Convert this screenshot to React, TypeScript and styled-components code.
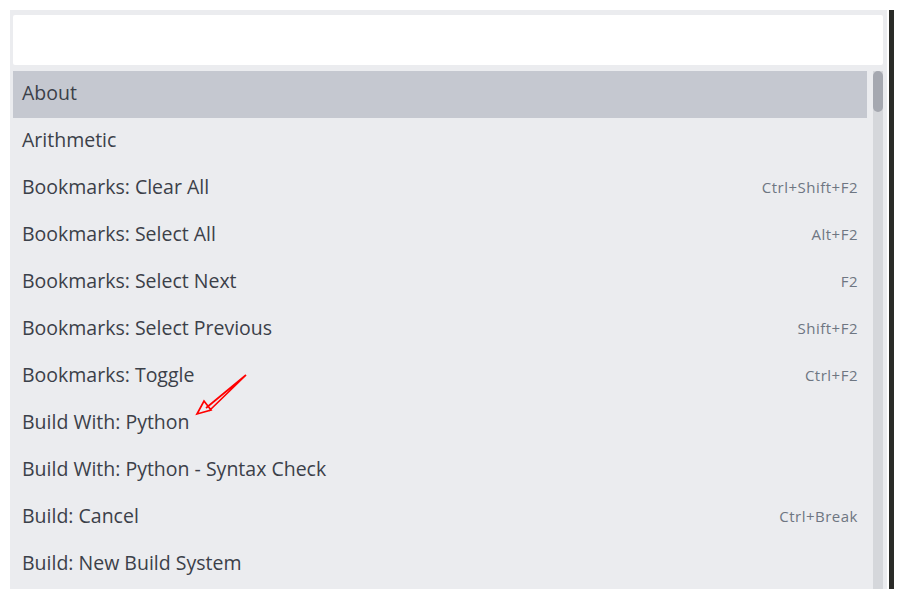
import React from "react";
import styled, { createGlobalStyle } from "styled-components";

const Global = createGlobalStyle`
  html, body { margin: 0; padding: 0; background: #ffffff; overflow: hidden; }
  body { font-family: "Open Sans", "Noto Sans", sans-serif; }
`;

const Page = styled.div`
  display: flex;
  align-items: stretch;
  gap: 2px;
  padding: 10px 0 0 10px;
  height: 589px;
  box-sizing: border-box;
  position: relative;
`;

const Panel = styled.div`
  width: 877px;
  background: #ebecef;
  padding: 5px 4px 0 3px;
  box-sizing: border-box;
  display: flex;
  flex-direction: column;
  gap: 6px;
  overflow: hidden;
`;

const Edge = styled.div`
  width: 5px;
  background: #2a2b27;
`;

const Input = styled.div`
  height: 50px;
  background: #ffffff;
  border-radius: 2px;
  flex-shrink: 0;
`;

const Body = styled.div`
  display: flex;
  gap: 6px;
  flex: 1;
  min-height: 0;
`;

const List = styled.div`
  flex: 1;
  display: flex;
  flex-direction: column;
`;

const Row = styled.div<{ $selected?: boolean }>`
  height: 47px;
  flex-shrink: 0;
  display: flex;
  align-items: center;
  justify-content: space-between;
  padding: 0 9px 4px 9px;
  box-sizing: border-box;
  background: ${(p) => (p.$selected ? "#c5c8d0" : "transparent")};
`;

const Label = styled.span`
  font-size: 19.5px;
  color: #3b4049;
`;

const Key = styled.span`
  font-size: 15px;
  letter-spacing: 0.5px;
  color: #6e7682;
  padding-top: 1px;
`;

const Track = styled.div`
  width: 10px;
  background: #d5d7db;
`;

const Thumb = styled.div`
  height: 41px;
  background: #a5a8b0;
  border-radius: 5px;
`;

const Arrow = styled.svg`
  position: absolute;
  left: 190px;
  top: 368px;
  overflow: visible;
`;

const items: [string, string][] = [
  ["About", ""],
  ["Arithmetic", ""],
  ["Bookmarks: Clear All", "Ctrl+Shift+F2"],
  ["Bookmarks: Select All", "Alt+F2"],
  ["Bookmarks: Select Next", "F2"],
  ["Bookmarks: Select Previous", "Shift+F2"],
  ["Bookmarks: Toggle", "Ctrl+F2"],
  ["Build With: Python", ""],
  ["Build With: Python - Syntax Check", ""],
  ["Build: Cancel", "Ctrl+Break"],
  ["Build: New Build System", ""],
];

export default function App() {
  return (
    <>
      <Global />
      <Page>
        <Panel>
          <Input />
          <Body>
            <List>
              {items.map(([l, k], i) => (
                <Row key={l} $selected={i === 0}>
                  <Label>{l}</Label>
                  {k && <Key>{k}</Key>}
                </Row>
              ))}
            </List>
            <Track>
              <Thumb />
            </Track>
          </Body>
        </Panel>
        <Edge />
        <Arrow width="70" height="60" viewBox="0 0 70 60">
          <path
            d="M56 7 L16 40 M56 7 L19 43 M7 46 L14 33 L21 42 Z"
            fill="none"
            stroke="#ff0000"
            strokeWidth="1.7"
            strokeLinejoin="miter"
          />
        </Arrow>
      </Page>
    </>
  );
}
